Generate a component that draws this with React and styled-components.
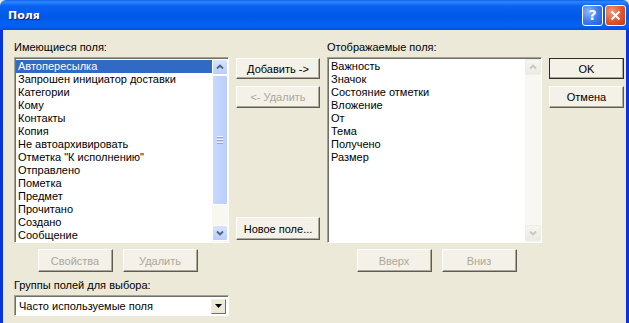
import React from "react";
import styled, { createGlobalStyle } from "styled-components";

const GlobalStyle = createGlobalStyle`
	html, body {
		margin: 0;
		padding: 0;
		background: #ece9d8;
	}
	body {
		font-family: "Liberation Sans", Arial, sans-serif;
		font-size: 11px;
		color: #000;
	}
`;

const Window = styled.div`
	width: 629px;
	height: 323px;
	display: flex;
	flex-direction: column;
	background: #ece9d8;
	overflow: hidden;
`;

const TitleBar = styled.div`
	height: 30px;
	display: flex;
	align-items: center;
	padding: 0 3px 0 8px;
	background: linear-gradient(
		to bottom,
		#0a5fe8 0%,
		#2f86ff 6%,
		#0a62f0 20%,
		#0058e6 55%,
		#0262f4 85%,
		#0050dc 100%
	);
	border-radius: 6px 6px 0 0;
`;

const Title = styled.span`
	flex: 1;
	color: #fff;
	font-family: "DejaVu Sans", sans-serif;
	font-weight: bold;
	font-size: 11px;
	text-shadow: 1px 1px 0 #0a1c7a;
`;

const TitleButton = styled.div`
	width: 21px;
	height: 21px;
	margin-left: 2px;
	box-sizing: border-box;
	border: 1px solid #fff;
	border-radius: 3px;
	display: flex;
	align-items: center;
	justify-content: center;
	color: #fff;
	font-family: "DejaVu Sans", sans-serif;
	font-weight: bold;
	font-size: 14px;
	background: ${({ $close }) =>
		$close
			? "radial-gradient(circle at 30% 30%, #f29b7f 0%, #e0542c 55%, #c33a16 100%)"
			: "radial-gradient(circle at 30% 30%, #8fb6ff 0%, #3a78ee 55%, #2458d6 100%)"};
`;

const Body = styled.div`
	flex: 1;
	display: grid;
	grid-template-columns: 215px 84px 215px 75px;
	grid-template-rows: 27px 186px 29px 23px 21px;
	column-gap: 7px;
	padding-left: 11px;
	border-left: 3px solid #0835d9;
	border-right: 3px solid #0835d9;
`;

const Label = styled.div`
	align-self: end;
	line-height: 13px;
	margin-bottom: 3px;
	white-space: nowrap;
	grid-column: ${({ $span }) => $span || "auto"};
`;

const ListBox = styled.div`
	display: flex;
	box-sizing: border-box;
	background: #fff;
	border: 1px solid;
	border-color: #a5a293 #fff #fff #a5a293;
	box-shadow: inset 1px 1px 0 #716f64;
	padding: 1px 0 0 1px;
`;

const Items = styled.div`
	flex: 1;
	overflow: hidden;
	padding-top: 1px;
`;

const Item = styled.div`
	height: 13px;
	line-height: 13px;
	padding-left: 2px;
	white-space: nowrap;
	background: ${({ $selected }) => ($selected ? "#316ac5" : "transparent")};
	color: ${({ $selected }) => ($selected ? "#fff" : "#000")};
`;

const ScrollBar = styled.div`
	width: 16px;
	display: flex;
	flex-direction: column;
	background: #f8f7f2;
	padding-bottom: 1px;
`;

const ScrollBtn = styled.div`
	height: 16px;
	box-sizing: border-box;
	border: 1px solid ${({ $disabled }) => ($disabled ? "#eeede5" : "#fff")};
	border-radius: 2px;
	display: flex;
	align-items: center;
	justify-content: center;
	background: ${({ $disabled }) =>
		$disabled
			? "linear-gradient(#f6f5f0, #ebeae3)"
			: "linear-gradient(#d9e4fd, #b8cdf8)"};
`;

const Thumb = styled.div`
	height: 130px;
	box-sizing: border-box;
	border: 1px solid #fff;
	border-radius: 2px;
	background: linear-gradient(to right, #c8d7fd, #bbcefa);
	display: flex;
	flex-direction: column;
	align-items: center;
	justify-content: center;
	gap: 1px;
`;

const Grip = styled.div`
	width: 6px;
	height: 1px;
	background: #eef3ff;
	border-bottom: 1px solid #8aa6e6;
`;

const Track = styled.div`
	flex: 1;
`;

const MiddleCol = styled.div`
	display: flex;
	flex-direction: column;
	gap: 7px;
	padding-top: 1px;
`;

const Button = styled.div`
	height: ${({ $h }) => $h || 22}px;
	width: ${({ $w }) => ($w ? `${$w}px` : "100%")};
	box-sizing: border-box;
	display: flex;
	align-items: center;
	justify-content: center;
	white-space: nowrap;
	background: #f3f1e8;
	color: ${({ disabled }) => (disabled ? "#aca899" : "#000")};
	border: 1px solid;
	border-color: #fffffb #5e5c52 #5e5c52 #fffffb;
	box-shadow: inset -1px -1px 0 #aca899;
	outline: ${({ $default }) => ($default ? "1px solid #2b2b2b" : "none")};
	outline-offset: -1px;
`;

const Spacer = styled.div`
	flex: 1;
`;

const BottomButton = styled(Button)`
	margin-bottom: 3px;
`;

const ButtonRow = styled.div`
	display: flex;
	justify-content: center;
	align-items: flex-end;
	gap: 10px;
	padding-left: ${({ $left }) => $left || 0}px;
	padding-right: ${({ $right }) => $right || 0}px;
`;

const SideButtons = styled.div`
	display: flex;
	flex-direction: column;
	gap: 7px;
	padding-top: 1px;
`;

const Combo = styled.div`
	display: flex;
	align-items: center;
	box-sizing: border-box;
	background: #fff;
	border: 1px solid;
	border-color: #a5a293 #fff #fff #a5a293;
	box-shadow: inset 1px 1px 0 #716f64;
	padding: 2px 2px 1px 4px;
`;

const ComboText = styled.span`
	flex: 1;
	white-space: nowrap;
`;

const ComboBtn = styled.div`
	width: 15px;
	height: 15px;
	box-sizing: border-box;
	display: flex;
	align-items: center;
	justify-content: center;
	background: #ece9d8;
	border: 1px solid;
	border-color: #f1efe2 #716f64 #716f64 #f1efe2;
`;

const Chevron = ({ down, color }) => (
	<svg width="8" height="6" viewBox="0 0 8 6">
		<path
			d={down ? "M1 1.5 L4 4.5 L7 1.5" : "M1 4.5 L4 1.5 L7 4.5"}
			fill="none"
			stroke={color}
			strokeWidth="1.8"
		/>
	</svg>
);

const Scroll = ({ disabled }) => {
	const arrow = disabled ? "#c9c7ba" : "#4d6185";
	return (
		<ScrollBar>
			<ScrollBtn $disabled={disabled}>
				<Chevron color={arrow} />
			</ScrollBtn>
			{!disabled && (
				<Thumb>
					<Grip />
					<Grip />
					<Grip />
				</Thumb>
			)}
			<Track />
			<ScrollBtn $disabled={disabled}>
				<Chevron down color={arrow} />
			</ScrollBtn>
		</ScrollBar>
	);
};

const available = [
	"Автопересылка",
	"Запрошен инициатор доставки",
	"Категории",
	"Кому",
	"Контакты",
	"Копия",
	"Не автоархивировать",
	"Отметка \"К исполнению\"",
	"Отправлено",
	"Пометка",
	"Предмет",
	"Прочитано",
	"Создано",
	"Сообщение",
];

const shown = [
	"Важность",
	"Значок",
	"Состояние отметки",
	"Вложение",
	"От",
	"Тема",
	"Получено",
	"Размер",
];

export default function App() {
	return (
		<>
			<GlobalStyle />
			<Window>
				<TitleBar>
					<Title>Поля</Title>
					<TitleButton>?</TitleButton>
					<TitleButton $close>
						<svg width="11" height="11" viewBox="0 0 11 11">
							<path d="M1.5 1.5 L9.5 9.5 M9.5 1.5 L1.5 9.5" stroke="#fff" strokeWidth="2" />
						</svg>
					</TitleButton>
				</TitleBar>
				<Body>
					<Label>Имеющиеся поля:</Label>
					<div />
					<Label>Отображаемые поля:</Label>
					<div />

					<ListBox>
						<Items>
							{available.map((name, i) => (
								<Item key={name} $selected={i === 0}>
									{name}
								</Item>
							))}
						</Items>
						<Scroll />
					</ListBox>
					<MiddleCol>
						<Button $h={21}>Добавить -&gt;</Button>
						<Button disabled>&lt;- Удалить</Button>
						<Spacer />
						<BottomButton $h={23}>Новое поле...</BottomButton>
					</MiddleCol>
					<ListBox>
						<Items>
							{shown.map((name) => (
								<Item key={name}>{name}</Item>
							))}
						</Items>
						<Scroll disabled />
					</ListBox>
					<SideButtons>
						<Button $h={21} $default>
							OK
						</Button>
						<Button>Отмена</Button>
					</SideButtons>

					<ButtonRow $right={8}>
						<Button $w={75} $h={23} disabled>
							Свойства
						</Button>
						<Button $w={75} $h={23} disabled>
							Удалить
						</Button>
					</ButtonRow>
					<div />
					<ButtonRow $left={4}>
						<Button $w={75} $h={23} disabled>
							Вверх
						</Button>
						<Button $w={75} $h={23} disabled>
							Вниз
						</Button>
					</ButtonRow>
					<div />

					<Label $span="1 / 3">Группы полей для выбора:</Label>
					<div />
					<div />
					<Combo>
						<ComboText>Часто используемые поля</ComboText>
						<ComboBtn>
							<svg width="7" height="4" viewBox="0 0 7 4">
								<path d="M0 0 H7 L3.5 4 Z" fill="#000" />
							</svg>
						</ComboBtn>
					</Combo>
				</Body>
			</Window>
		</>
	);
}
